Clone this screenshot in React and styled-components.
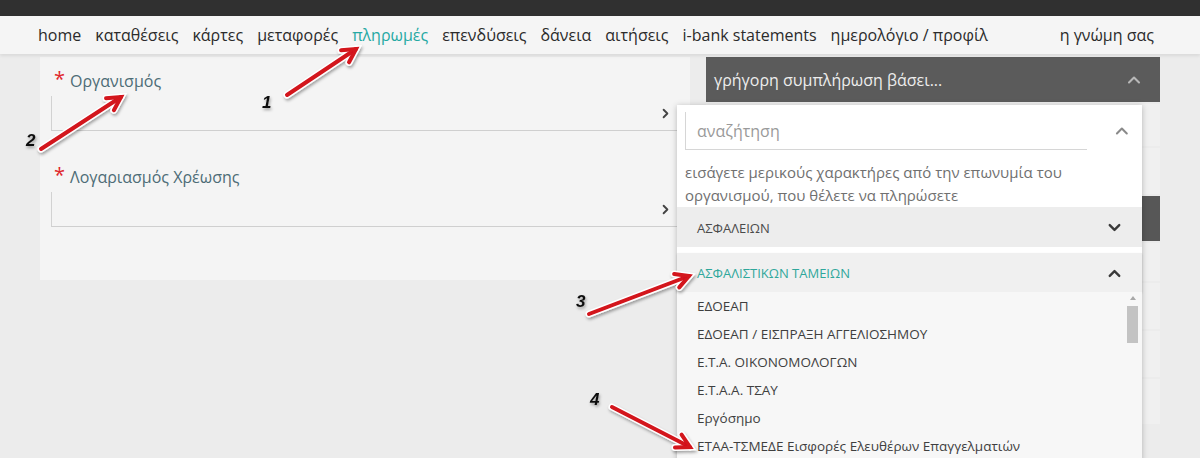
import React from "react";
import styled, { createGlobalStyle } from "styled-components";
import { ChevronUp, ChevronDown, ChevronRight } from "lucide-react";

const GlobalStyle = createGlobalStyle`
  html, body {
    margin: 0;
    padding: 0;
    background: #ececec;
    font-family: "Open Sans", "Noto Sans", sans-serif;
  }
  * { box-sizing: border-box; }
`;

const Page = styled.div`
  position: relative;
  width: 1200px;
  height: 458px;
  overflow: hidden;
  background: #ececec;
`;

const TopStrip = styled.div`
  height: 16px;
  background: #303030;
`;

const NavBar = styled.nav`
  height: 38px;
  display: flex;
  align-items: center;
  padding: 0 46px 0 38px;
  background: #f5f5f5;
  box-shadow: 0 2px 3px rgba(0, 0, 0, 0.08);
  position: relative;
  z-index: 1;
`;

const NavList = styled.div`
  display: flex;
  gap: 14px;
`;

const NavItem = styled.span`
  font-size: 16px;
  color: ${(p) => (p.$active ? "#25a9a3" : "#2b2b2b")};
  white-space: nowrap;
`;

const Feedback = styled(NavItem)`
  margin-left: auto;
`;

const Main = styled.div`
  display: flex;
  gap: 16px;
  padding: 3px 40px 0 40px;
`;

const LeftPanel = styled.section`
  width: 650px;
  height: 223px;
  background: #f4f4f4;
  padding: 9px 10px 0 11px;
  display: flex;
  flex-direction: column;
  gap: 31px;
`;

const FieldGroup = styled.div`
  display: flex;
  flex-direction: column;
`;

const Label = styled.div`
  font-size: 16px;
  color: #4d6c76;
  height: 30px;
  display: flex;
  align-items: center;
  padding-left: 3px;
`;

const Star = styled.span`
  color: #e0262b;
  font-size: 20px;
  margin-right: 5px;
  position: relative;
  top: -3px;
`;

const Field = styled.div`
  height: 35px;
  border-left: 1px solid #d2d2d2;
  border-bottom: 1px solid #cfcfcf;
  display: flex;
  align-items: center;
  justify-content: flex-end;
  padding-right: 7px;
  color: #444;
`;

const RightCol = styled.section`
  position: relative;
  width: 454px;
  display: flex;
  flex-direction: column;
`;

const QuickHeader = styled.div`
  height: 45px;
  background: #5b5b5b;
  color: #ededed;
  font-size: 16px;
  display: flex;
  align-items: center;
  justify-content: space-between;
  padding: 0 16px 0 8px;
`;

const BackRows = styled.div`
  display: flex;
  flex-direction: column;
  gap: 2px;
  padding-top: 2px;
`;

const BackRow = styled.div`
  height: ${(p) => p.$h}px;
  background: ${(p) => (p.$dark ? "#575757" : "#f0f0f0")};
`;

const Dropdown = styled.div`
  position: absolute;
  left: -29px;
  top: 48px;
  width: 465px;
  background: #fff;
  box-shadow: 0 1px 6px rgba(0, 0, 0, 0.25);
  z-index: 2;
`;

const SearchRow = styled.div`
  display: flex;
  align-items: center;
  padding: 7px 10px 0 8px;
  gap: 25px;
`;

const SearchBox = styled.div`
  width: 408px;
  height: 38px;
  border-left: 1px solid #d6d6d6;
  border-bottom: 1px solid #d6d6d6;
  display: flex;
  align-items: center;
  padding-left: 11px;
  font-size: 16px;
  color: #9a9a9a;
`;

const Help = styled.p`
  margin: 0;
  padding: 11px 40px 0 8px;
  font-size: 15px;
  line-height: 23px;
  color: #707070;
`;

const GroupHeader = styled.div`
  height: ${(p) => (p.$open ? 39 : 40)}px;
  margin-top: ${(p) => (p.$open ? 6 : 0)}px;
  background: ${(p) => (p.$open ? "#f0f0f0" : "#ededed")};
  display: flex;
  align-items: center;
  justify-content: space-between;
  padding: 1px 18px 0 20px;
  font-size: 13px;
  color: ${(p) => (p.$open ? "#2fa79b" : "#4a4a4a")};
  box-shadow: ${(p) => (p.$open ? "0 1px 2px rgba(0,0,0,0.15)" : "none")};
  position: relative;
`;

const GroupGap = styled.div`
  background: #f8f8f8;
`;

const List = styled.div`
  position: relative;
  background: #f7f7f7;
  height: 170px;
`;

const Item = styled.div`
  height: 28px;
  display: flex;
  align-items: center;
  padding-left: 20px;
  font-size: 13.5px;
  color: #3f3f3f;
`;

const ScrollTrack = styled.div`
  position: absolute;
  right: 4px;
  top: 2px;
  width: 11px;
  bottom: 0;
  display: flex;
  flex-direction: column;
  align-items: center;
`;

const ScrollArrow = styled.div`
  width: 0;
  height: 0;
  border-left: 3px solid transparent;
  border-right: 3px solid transparent;
  border-bottom: 4px solid #a8a8a8;
  margin: 2px 0 6px;
`;

const ScrollThumb = styled.div`
  width: 11px;
  height: 37px;
  background: #c3c3c3;
`;

const Overlay = styled.svg`
  position: absolute;
  inset: 0;
  pointer-events: none;
  z-index: 5;
`;

const navItems = [
  "home",
  "καταθέσεις",
  "κάρτες",
  "μεταφορές",
  "πληρωμές",
  "επενδύσεις",
  "δάνεια",
  "αιτήσεις",
  "i-bank statements",
  "ημερολόγιο / προφίλ",
];

const funds = [
  "ΕΔΟΕΑΠ",
  "ΕΔΟΕΑΠ / ΕΙΣΠΡΑΞΗ ΑΓΓΕΛΙΟΣΗΜΟΥ",
  "Ε.Τ.Α. ΟΙΚΟΝΟΜΟΛΟΓΩΝ",
  "Ε.Τ.Α.Α. ΤΣΑΥ",
  "Εργόσημο",
  "ΕΤΑΑ-ΤΣΜΕΔΕ Εισφορές Ελευθέρων Επαγγελματιών",
];

const backRows = [
  { h: 42 },
  { h: 46 },
  { h: 45, dark: true },
  { h: 38 },
  { h: 46 },
  { h: 46 },
  { h: 45 },
];

// red annotation arrows: tail -> tip
const arrows = [
  { n: "1", tx: 262, ty: 108, x1: 287, y1: 95, x2: 356, y2: 49 },
  { n: "2", tx: 26, ty: 146, x1: 41, y1: 149, x2: 121, y2: 97 },
  { n: "3", tx: 576, ty: 307, x1: 589, y1: 314, x2: 689, y2: 276 },
  { n: "4", tx: 590, ty: 405, x1: 612, y1: 407, x2: 690, y2: 447 },
];

const headPoints = (a) => {
  const ang = Math.atan2(a.y2 - a.y1, a.x2 - a.x1);
  const len = 15;
  const spread = 0.5;
  const p1 = [a.x2 - len * Math.cos(ang - spread), a.y2 - len * Math.sin(ang - spread)];
  const p2 = [a.x2 - len * Math.cos(ang + spread), a.y2 - len * Math.sin(ang + spread)];
  return `${p1[0]},${p1[1]} ${a.x2},${a.y2} ${p2[0]},${p2[1]}`;
};

const Annotations = () => (
  <Overlay width="1200" height="458" viewBox="0 0 1200 458">
    <defs>
      <filter id="sh" x="-20%" y="-20%" width="140%" height="140%">
        <feDropShadow dx="1" dy="2" stdDeviation="1.5" floodColor="#000" floodOpacity="0.35" />
      </filter>
    </defs>
    {arrows.map((a) => (
      <g key={a.n} filter="url(#sh)" strokeLinecap="round" strokeLinejoin="miter" fill="none">
        <line x1={a.x1} y1={a.y1} x2={a.x2} y2={a.y2} stroke="#fff" strokeWidth="7" />
        <polyline points={headPoints(a)} stroke="#fff" strokeWidth="7" />
        <line x1={a.x1} y1={a.y1} x2={a.x2} y2={a.y2} stroke="#d3121c" strokeWidth="4" />
        <polyline points={headPoints(a)} stroke="#d3121c" strokeWidth="4" />
        <text
          x={a.tx}
          y={a.ty}
          fill="#111"
          stroke="none"
          fontFamily="Liberation Sans, sans-serif"
          fontSize="17"
          fontStyle="italic"
          fontWeight="bold"
        >
          {a.n}
        </text>
      </g>
    ))}
  </Overlay>
);

export default function App() {
  return (
    <Page>
      <GlobalStyle />
      <TopStrip />
      <NavBar>
        <NavList>
          {navItems.map((t) => (
            <NavItem key={t} $active={t === "πληρωμές"}>
              {t}
            </NavItem>
          ))}
        </NavList>
        <Feedback>η γνώμη σας</Feedback>
      </NavBar>
      <Main>
        <LeftPanel>
          <FieldGroup>
            <Label>
              <Star>*</Star>Οργανισμός
            </Label>
            <Field>
              <ChevronRight size={15} strokeWidth={3} />
            </Field>
          </FieldGroup>
          <FieldGroup>
            <Label>
              <Star>*</Star>Λογαριασμός Χρέωσης
            </Label>
            <Field>
              <ChevronRight size={15} strokeWidth={3} />
            </Field>
          </FieldGroup>
        </LeftPanel>
        <RightCol>
          <QuickHeader>
            γρήγορη συμπλήρωση βάσει...
            <ChevronUp size={20} strokeWidth={2.5} color="#b8b8b8" />
          </QuickHeader>
          <BackRows>
            {backRows.map((r, i) => (
              <BackRow key={i} $h={r.h} $dark={r.dark} />
            ))}
          </BackRows>
          <Dropdown>
            <SearchRow>
              <SearchBox>αναζήτηση</SearchBox>
              <ChevronUp size={20} strokeWidth={2.5} color="#8a8a8a" />
            </SearchRow>
            <Help>
              εισάγετε μερικούς χαρακτήρες από την επωνυμία του οργανισμού, που θέλετε να
              πληρώσετε
            </Help>
            <GroupHeader>
              ΑΣΦΑΛΕΙΩΝ
              <ChevronDown size={19} strokeWidth={3} color="#3a3a3a" />
            </GroupHeader>
            <GroupGap>
              <GroupHeader $open>
                ΑΣΦΑΛΙΣΤΙΚΩΝ ΤΑΜΕΙΩΝ
                <ChevronUp size={19} strokeWidth={3} color="#3a3a3a" />
              </GroupHeader>
            </GroupGap>
            <List>
              {funds.map((f) => (
                <Item key={f}>{f}</Item>
              ))}
              <ScrollTrack>
                <ScrollArrow />
                <ScrollThumb />
              </ScrollTrack>
            </List>
          </Dropdown>
        </RightCol>
      </Main>
      <Annotations />
    </Page>
  );
}
